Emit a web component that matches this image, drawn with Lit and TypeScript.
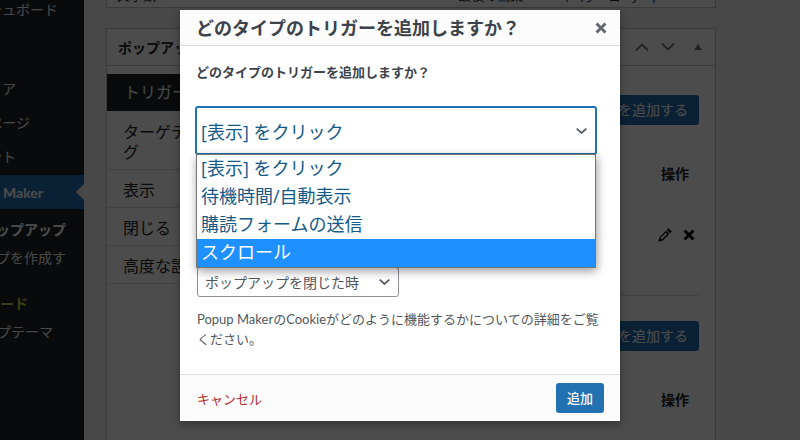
import { LitElement, html, css, svg } from "lit";
import { customElement } from "lit/decorators.js";

const chevron = svg`<polyline points="0.7,0.7 5.5,5 10.3,0.7" fill="none" stroke="currentColor" stroke-width="1.7"/>`;

const sideRows = [
  { t: "ダッシュボード", end: 58, top: 0, cls: "" },
  { t: "メディア", end: 16, top: 62, cls: "" },
  { t: "固定ページ", end: 30, top: 17, cls: "" },
  { t: "コメント", end: 16, top: 17, cls: "" },
];
const subRows = [
  { t: "ポップアップ", end: 66, top: 12, cls: "strong" },
  { t: "ポップアップを作成す", end: 66, top: 11, cls: "" },
  { t: "ボード", end: 28, top: 29, cls: "green" },
  { t: "ポップテーマ", end: 53, top: 11, cls: "" },
];

@customElement("app-root")
export class AppRoot extends LitElement {
  static styles = css`
    :host {
      display: block;
      position: relative;
      width: 800px;
      height: 440px;
      overflow: hidden;
      background: #f0f0f1;
      color: #1d2327;
      font-family: "Open Sans", "Noto Sans CJK JP", sans-serif;
    }
    .page { display: flex; height: 440px; overflow: hidden; }
    .side {
      flex: none;
      width: 84px;
      height: 440px;
      overflow: hidden;
      background: #1d2327;
      color: #f0f0f1;
      font-size: 14px;
      padding-top: 1px;
      box-sizing: border-box;
    }
    .srow {
      display: flex;
      justify-content: flex-end;
      white-space: nowrap;
      height: 17px;
      line-height: 17px;
    }
    .active {
      display: flex;
      align-items: center;
      justify-content: flex-end;
      position: relative;
      height: 34px;
      background: #2271b1;
      color: #fff;
      font-family: "Lato", "Noto Sans CJK JP", sans-serif;
      font-weight: 700;
      padding-right: 41px;
      box-sizing: border-box;
      white-space: nowrap;
    }
    .active::after {
      content: "";
      position: absolute;
      right: 0;
      top: 9px;
      border: 8px solid transparent;
      border-right-color: #f0f0f1;
      border-left-width: 0;
    }
    .strong { font-weight: 700; color: #fff; }
    .green { color: #c8d24a; font-weight: 700; }
    .main { flex: 1; padding-left: 22px; min-width: 0; box-sizing: border-box; padding-right: 84px; }
    .box { background: #fff; border: 1px solid #c3c4c7; box-sizing: border-box; }
    .box1 {
      height: 8px;
      border-top: none;
      overflow: hidden;
      display: flex;
      justify-content: space-between;
      font-size: 13px;
      line-height: 16px;
      padding: 0 12px 0 10px;
    }
    .box1 span { margin-top: -13px; white-space: nowrap; }
    .box2 { margin-top: 20px; height: 500px; }
    .head {
      display: flex;
      align-items: center;
      height: 37px;
      box-sizing: border-box;
      border-bottom: 1px solid #c3c4c7;
      padding: 0 13px 0 11px;
      font-size: 14px;
      font-weight: 700;
    }
    .head .ttl { flex: 1; }
    .head svg { display: block; color: #6a6e72; }
    .head .ic { margin-left: 12px; }
    .cols { display: flex; padding-top: 8px; }
    .tabs { flex: none; width: 140px; font-size: 16px; line-height: 20px; }
    .tab { padding: 10px 16px 7px; border-bottom: 1px solid #dcdcde; }
    .tab.wrap { padding-top: 11px; }
    .tab.on {
      background: #1d2327;
      color: #f0f0f1;
      padding: 8px 16px 9px 17px;
      height: 37px;
      box-sizing: border-box;
      border: none;
    }
    .pane {
      flex: 1;
      display: flex;
      flex-direction: column;
      padding: 21px 16px 0 0;
    }
    .add {
      align-self: flex-end;
      height: 30px;
      line-height: 30px;
      padding: 0 11px;
      background: #2271b1;
      color: #fff;
      font-size: 14px;
      border-radius: 3px;
      white-space: nowrap;
    }
    .th {
      margin-top: 39px;
      align-self: flex-end;
      padding-right: 10px;
      font-size: 14px;
      font-weight: 700;
      line-height: 20px;
    }
    .acts { display: flex; justify-content: flex-end; gap: 11px; margin-top: 43px; padding-right: 4px; height: 16px; align-items: center; }
    .hr { margin-top: 52px; height: 1px; background: #dcdcde; }
    .add2 { margin-top: 25px; }

    .overlay { position: absolute; inset: 0; background: rgba(0, 0, 0, 0.7); }
    .modal {
      position: absolute;
      left: 180px;
      top: 10px;
      width: 440px;
      height: 411px;
      display: flex;
      flex-direction: column;
      background: #fff;
      box-shadow: 0 3px 8px rgba(0, 0, 0, 0.35);
    }
    .mhead {
      flex: none;
      height: 36px;
      box-sizing: border-box;
      display: flex;
      align-items: center;
      justify-content: space-between;
      padding: 0 13px 0 16px;
      background: #fcfcfc;
      border-bottom: 1px solid #dddddd;
      color: #3c434a;
    }
    .mhead h2 { margin: 0; font-size: 18px; line-height: 24px; font-weight: 700; white-space: nowrap; }
    .mhead svg { display: block; color: #646970; }
    .mbody { flex: 1; padding: 16px 17px 0; color: #3c434a; }
    .lab { font-size: 13px; font-weight: 700; line-height: 20px; margin-left: -1px; }
    .selwrap { position: relative; margin: 24px 6px 0 -2px; }
    .sel {
      height: 49px;
      box-sizing: border-box;
      border: 2px solid #2271b1;
      border-radius: 3px;
      display: flex;
      align-items: center;
      justify-content: space-between;
      padding: 0 8px 0 4px;
      font-size: 18px;
      color: #145a88;
      background: #fff;
    }
    .sel svg { color: #50575e; display: block; }
    .drop {
      position: absolute;
      left: 1px;
      right: 1px;
      top: 48px;
      background: #fff;
      border: 1px solid #767676;
      box-shadow: 1px 3px 9px rgba(0, 0, 0, 0.4);
      font-size: 18px;
      color: #145a88;
      z-index: 1;
    }
    .opt { height: 28px; line-height: 26px; padding-left: 4px; white-space: nowrap; }
    .opt.hi { background: #1e90ff; color: #fff; }
    .sel2 {
      margin-top: 112px;
      width: 202px;
      height: 30px;
      box-sizing: border-box;
      border: 1px solid #8c8f94;
      border-radius: 3px;
      display: flex;
      align-items: center;
      justify-content: space-between;
      padding: 0 8px 0 7px;
      font-size: 14px;
      color: #50575e;
    }
    .sel2 svg { display: block; color: #50575e; }
    .desc {
      margin: 12px 0 0;
      font-family: "Lato", "Noto Sans CJK JP", sans-serif;
      font-size: 13px;
      line-height: 20px;
      color: #50575e;
    }
    .mfoot {
      flex: none;
      height: 47px;
      box-sizing: border-box;
      display: flex;
      align-items: center;
      justify-content: space-between;
      padding: 0 16px 0 17px;
      background: #fcfcfc;
      border-top: 1px solid #dddddd;
    }
    .cancel { color: #b32d2e; font-size: 13px; }
    .ok {
      width: 48px;
      height: 30px;
      line-height: 30px;
      text-align: center;
      background: #2271b1;
      color: #fff;
      font-size: 13px;
      font-weight: 500;
      border-radius: 3px;
    }
  `;

  private row(r: { t: string; end: number; top: number; cls: string }) {
    return html`<div class="srow ${r.cls}" style="width:${r.end}px;margin-top:${r.top}px"><span>${r.t}</span></div>`;
  }

  render() {
    return html`
      <div class="page">
        <aside class="side">
          ${sideRows.map((r) => this.row(r))}
          <div class="active" style="margin-top:10px"><span>Popup Maker</span></div>
          ${subRows.map((r) => this.row(r))}
        </aside>
        <main class="main">
          <div class="box box1"><span>文字数: 0</span><span>最後の編集: 2021年7月22日 by wpmaster</span></div>
          <section class="box box2">
            <div class="head">
              <span class="ttl">ポップアップ設定</span>
              <svg class="ic" width="14" height="8" viewBox="0 0 14 8"><polyline points="1,7.3 7,1.6 13,7.3" fill="none" stroke="currentColor" stroke-width="1.8"/></svg>
              <svg class="ic" width="14" height="8" viewBox="0 0 14 8"><polyline points="1,0.7 7,6.4 13,0.7" fill="none" stroke="currentColor" stroke-width="1.8"/></svg>
              <svg class="ic" style="margin-left:19px" width="8" height="6" viewBox="0 0 8 6"><polygon points="4,0 8,6 0,6" fill="currentColor"/></svg>
            </div>
            <div class="cols">
              <div class="tabs">
                <div class="tab on">トリガー</div>
                <div class="tab wrap">ターゲティング</div>
                <div class="tab">表示</div>
                <div class="tab">閉じる</div>
                <div class="tab">高度な設定</div>
              </div>
              <div class="pane">
                <div class="add">トリガーを追加する</div>
                <div class="th">操作</div>
                <div class="acts">
                  <svg width="14" height="14" viewBox="0 0 14 14"><path d="M10.4 0.3 13.7 3.6 12.1 5.2 8.8 1.9ZM8 2.7 11.3 6 4.8 12.5 0.3 13.7 1.5 9.2ZM2.9 9.6 2.4 11.6 4.4 11.1 9.4 6 8 4.6Z" fill="#000" fill-rule="evenodd"/></svg>
                  <svg width="12" height="12" viewBox="0 0 12 12"><path d="M1.5 1.5 10.5 10.5M10.5 1.5 1.5 10.5" stroke="#000" stroke-width="3"/></svg>
                </div>
                <div class="hr"></div>
                <div class="add add2">Cookieを追加する</div>
                <div class="th">操作</div>
              </div>
            </div>
          </section>
        </main>
      </div>
      <div class="overlay"></div>
      <div class="modal">
        <header class="mhead">
          <h2>どのタイプのトリガーを追加しますか？</h2>
          <svg width="12" height="12" viewBox="0 0 12 12"><path d="M1.5 1.5 10.5 10.5M10.5 1.5 1.5 10.5" stroke="currentColor" stroke-width="3"/></svg>
        </header>
        <div class="mbody">
          <div class="lab">どのタイプのトリガーを追加しますか？</div>
          <div class="selwrap">
            <div class="sel">
              <span>[表示] をクリック</span>
              <svg width="11" height="6" viewBox="0 0 11 6">${chevron}</svg>
            </div>
            <div class="drop">
              <div class="opt">[表示] をクリック</div>
              <div class="opt">待機時間/自動表示</div>
              <div class="opt">購読フォームの送信</div>
              <div class="opt hi">スクロール</div>
            </div>
          </div>
          <div class="sel2">
            <span>ポップアップを閉じた時</span>
            <svg width="11" height="6" viewBox="0 0 11 6">${chevron}</svg>
          </div>
          <p class="desc">Popup MakerのCookieがどのように機能するかについての詳細をご覧ください。</p>
        </div>
        <footer class="mfoot">
          <span class="cancel">キャンセル</span>
          <span class="ok">追加</span>
        </footer>
      </div>
    `;
  }
}
